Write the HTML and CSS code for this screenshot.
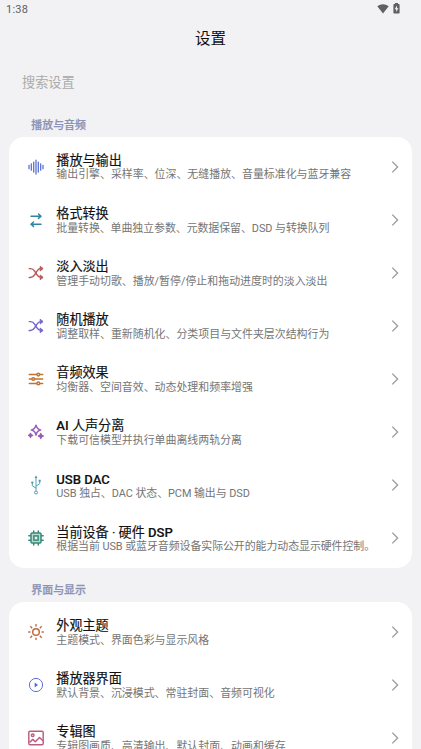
FILE: index.html
```html
<!DOCTYPE html>
<html lang="zh-CN">
<head>
<meta charset="utf-8">
<title>设置</title>
<link rel="stylesheet" href="styles.css">
</head>
<body>
<svg class="defs" width="0" height="0">
  <symbol id="chev" viewBox="0 0 8 14"><path d="M1.300 1.600 6.600 7 1.300 12.400" fill="none" stroke="currentColor" stroke-width="1.300"/></symbol>
  <symbol id="shuffle" viewBox="0 0 16 16"><g fill="none" stroke="currentColor" stroke-width="1.450" stroke-linecap="round" stroke-linejoin="round"><path d="M1.200 3.600h1.300c2 0 3.200 1 4.300 2.800l2 3.200c1.100 1.800 2.200 2.800 4 2.800H14"/><path d="M1.200 12.400h1.300c2 0 3.200-1 4.300-2.800l2-3.200c1.100-1.800 2.200-2.800 4-2.800H14"/></g><path d="M12.200 1.200 15.100 3.600 12.200 6zM12.200 10l2.900 2.400-2.900 2.400z" fill="currentColor" stroke="currentColor" stroke-width=".9" stroke-linejoin="round"/></symbol>
</svg>
<div class="status">
  <span>1:38</span>
  <span class="status-icons">
    <svg width="12" height="10" viewBox="0 0 12 10"><path d="M.3 2.300C3.700-.6 8.300-.6 11.700 2.300L6 9.500z" fill="#606060"/></svg>
    <svg width="7" height="11" viewBox="0 0 7 11"><path d="M2 0h3v1h.8q.8 0 .8.800v7.900q0 .8-.8.800H1.200q-.8 0-.8-.8V1.800q0-.8.8-.8H2z" fill="#606060"/><path d="M4 2.500 1.700 6.200h1.500V9l2.200-3.800H4z" fill="#f2f2f4"/></svg>
  </span>
</div>
<h1>设置</h1>
<div class="search">搜索设置</div>
<h2>播放与音频</h2>
<section class="card">
  <div class="row">
    <svg class="icon blue" viewBox="0 0 16 16"><path d="M1 6.300v3.400M3.300 4.800v6.400M5.700 3v10M8 1v14M10.300 3v10M12.700 4.800v6.400M15 6.300v3.400" stroke="currentColor" stroke-width="1.250" stroke-linecap="round"/></svg>
    <div class="text"><b>播放与输出</b><p>输出引擎、采样率、位深、无缝播放、音量标准化与蓝牙兼容</p></div>
    <svg class="chev"><use href="#chev"/></svg>
  </div>
  <div class="row">
    <svg class="icon teal" viewBox="0 0 16 16"><path d="M3 4.200h10M10.500 2 13 4.200l-2.500 2.200M13 12.200H3M5.500 10 3 12.200l2.500 2.200" fill="none" stroke="currentColor" stroke-width="1.500" stroke-linecap="round" stroke-linejoin="round"/></svg>
    <div class="text"><b>格式转换</b><p class="mixed">批量转换、单曲独立参数、元数据保留、DSD 与转换队列</p></div>
    <svg class="chev"><use href="#chev"/></svg>
  </div>
  <div class="row">
    <svg class="icon red"><use href="#shuffle"/></svg>
    <div class="text"><b>淡入淡出</b><p>管理手动切歌、播放/暂停/停止和拖动进度时的淡入淡出</p></div>
    <svg class="chev"><use href="#chev"/></svg>
  </div>
  <div class="row">
    <svg class="icon violet"><use href="#shuffle"/></svg>
    <div class="text"><b>随机播放</b><p>调整取样、重新随机化、分类项目与文件夹层次结构行为</p></div>
    <svg class="chev"><use href="#chev"/></svg>
  </div>
  <div class="row">
    <svg class="icon orange" viewBox="0 0 16 16"><g fill="#fff" stroke="currentColor" stroke-width="1.500" stroke-linecap="round"><path d="M1.300 3.600h13.400M1.300 8h13.400M1.300 12.400h13.400"/><circle cx="10.300" cy="3.600" r="1.350"/><circle cx="5.300" cy="8" r="1.350"/><circle cx="10.300" cy="12.400" r="1.350"/></g></svg>
    <div class="text"><b>音频效果</b><p>均衡器、空间音效、动态处理和频率增强</p></div>
    <svg class="chev"><use href="#chev"/></svg>
  </div>
  <div class="row">
    <svg class="icon purple" viewBox="0 0 16 16"><path d="M8 1.200q.8 4 4.600 4.900Q8.800 7 8 11 7.200 7 3.400 6.100 7.200 5.200 8 1.200z" fill="none" stroke="currentColor" stroke-width="1.500" stroke-linejoin="round"/><path d="M2.500 9.200q.4 1.800 2.200 2.200-1.800.4-2.200 2.200-.4-1.800-2.200-2.200 1.800-.4 2.200-2.200zM12.800 9.300q.5 2.200 2.700 2.700-2.200.5-2.700 2.700-.5-2.200-2.700-2.700 2.200-.5 2.700-2.700z" fill="currentColor" stroke="currentColor" stroke-width="1.100" stroke-linejoin="round"/></svg>
    <div class="text"><b><span class="latin">AI</span> 人声分离</b><p>下载可信模型并执行单曲离线两轨分离</p></div>
    <svg class="chev"><use href="#chev"/></svg>
  </div>
  <div class="row">
    <svg class="icon usb" viewBox="0 0 16 20"><g fill="none" stroke="currentColor" stroke-width=".9" stroke-linejoin="round"><path d="M8 2v13.800M8 13.200 4.300 10.700V8M8 11.200l3.700-2.500V6.500"/><circle cx="8" cy="17.500" r="1.500"/></g><path d="M8 .3 9.300 2.900H6.700zM10.700 4.700h2v2h-2z" fill="currentColor"/><circle cx="4.300" cy="7.600" r="1.150" fill="currentColor"/></svg>
    <div class="text"><b><span class="latin">USB DAC</span></b><p class="mixed">USB 独占、DAC 状态、PCM 输出与 DSD</p></div>
    <svg class="chev"><use href="#chev"/></svg>
  </div>
  <div class="row">
    <svg class="icon green" viewBox="0 0 16 16"><g fill="none" stroke="currentColor" stroke-width="1.500" stroke-linecap="round"><rect x="3" y="3" width="10" height="10" rx="1" fill="#b9d8d0"/><rect x="5.900" y="5.900" width="4.200" height="4.200" fill="#e4f1ee"/><path d="M5.700 2.500V.9M10.300 2.500V.9M5.700 15.100v-1.600M10.300 15.100v-1.600M2.500 5.700H.8M2.500 10.300H.8M15.200 5.700h-1.700M15.200 10.300h-1.700"/></g></svg>
    <div class="text"><b>当前设备 · 硬件 <span class="latin">DSP</span></b><p class="mixed">根据当前 USB 或蓝牙音频设备实际公开的能力动态显示硬件控制。</p></div>
    <svg class="chev"><use href="#chev"/></svg>
  </div>
</section>
<h2>界面与显示</h2>
<section class="card">
  <div class="row">
    <svg class="icon sun" viewBox="0 0 16 16"><g fill="none" stroke="currentColor" stroke-width="1.450" stroke-linecap="round"><circle cx="8" cy="8" r="3.300"/><path d="M8 .7v1.200M8 14.100v1.200M.7 8h1.200M14.100 8h1.200M2.800 2.800l.9.900M12.300 12.300l.9.900M2.800 13.200l.9-.9M12.300 3.700l.9-.9"/></g></svg>
    <div class="text"><b>外观主题</b><p>主题模式、界面色彩与显示风格</p></div>
    <svg class="chev"><use href="#chev"/></svg>
  </div>
  <div class="row">
    <svg class="icon blue" viewBox="0 0 16 16"><circle cx="8" cy="8" r="6.600" fill="none" stroke="currentColor" stroke-width=".95"/><path d="M6.700 5.600 10 8l-3.300 2.400z" fill="currentColor"/></svg>
    <div class="text"><b>播放器界面</b><p>默认背景、沉浸模式、常驻封面、音频可视化</p></div>
    <svg class="chev"><use href="#chev"/></svg>
  </div>
  <div class="row">
    <svg class="icon pink" viewBox="0 0 16 16"><g fill="none" stroke="currentColor" stroke-width="1.450" stroke-linejoin="round"><rect x=".8" y="1.200" width="14.400" height="13.600" rx="1.300"/><circle cx="4.700" cy="5.200" r="1.300"/><path d="M1.500 12.500 4.800 9.400l2.500 2.300 4.200-4.200 3.500 3.300"/></g></svg>
    <div class="text"><b>专辑图</b><p>专辑图画质、高清输出、默认封面、动画和缓存</p></div>
    <svg class="chev"><use href="#chev"/></svg>
  </div>
</section>
</body>
</html>
```
FILE: styles.css
```css
* { box-sizing: border-box; }
html, body { height: 749px; overflow: hidden; }
body {
  margin: 0;
  background: #f2f2f4;
  color: #111;
  font-family: Roboto, "Noto Sans CJK SC", sans-serif;
}
.defs { display: block; }
.status {
  display: flex;
  justify-content: space-between;
  align-items: center;
  height: 18px;
  padding: 0 21px 0 6px;
  font-size: 11px;
  letter-spacing: .25px;
  color: #606060;
}
.status-icons { display: flex; align-items: center; gap: 4px; margin-top: -1px; }
h1 {
  margin: 0;
  height: 40px;
  padding-top: 1px;
  line-height: 40px;
  text-align: center;
  font-size: 15.5px;
  font-weight: 400;
}
.search {
  height: 49px;
  padding-left: 22px;
  line-height: 49px;
  font-size: 13.2px;
  color: #aaa;
}
h2 {
  margin: 0;
  height: 34px;
  padding: 15px 0 0 31.3px;
  line-height: 16px;
  font-size: 10.95px;
  font-weight: 500;
  color: #8b92b5;
  -webkit-text-stroke: .25px #8b92b5;
}
.search + h2 { height: 30px; padding-top: 11px; }
.card {
  margin: 0 9px;
  padding: 3.2px 0;
  background: #fff;
  border-radius: 15px;
}
.row {
  display: flex;
  align-items: center;
  height: 53.1px;
  padding: 0 13px 0 19px;
}
.icon { width: 16px; height: 16px; margin-right: 12.3px; flex: none; }
.icon.usb { height: 20px; }
.chev { width: 8px; height: 14px; flex: none; color: #999; }
.text { flex: 1; padding-top: 3px; white-space: nowrap; }
.text b {
  display: block;
  height: 14.5px;
  line-height: 14.5px;
  font-size: 13.1px;
  font-weight: 400;
  -webkit-text-stroke: .15px #111;
}
.text .latin { font-weight: 500; }
.text p {
  margin: 0;
  height: 14px;
  line-height: 14px;
  font-size: 10.93px;
  color: #757575;
}
.text .mixed { letter-spacing: -.06px; }
.blue { color: #566bd0; }
.teal { color: #2f84a0; }
.red { color: #b75a5a; }
.violet { color: #7566cc; }
.orange { color: #bd7434; }
.purple { color: #9a5bb8; }
.usb { color: #4397aa; }
.green { color: #38897a; }
.sun { color: #bd693d; }
.pink { color: #bd5c80; }
```
